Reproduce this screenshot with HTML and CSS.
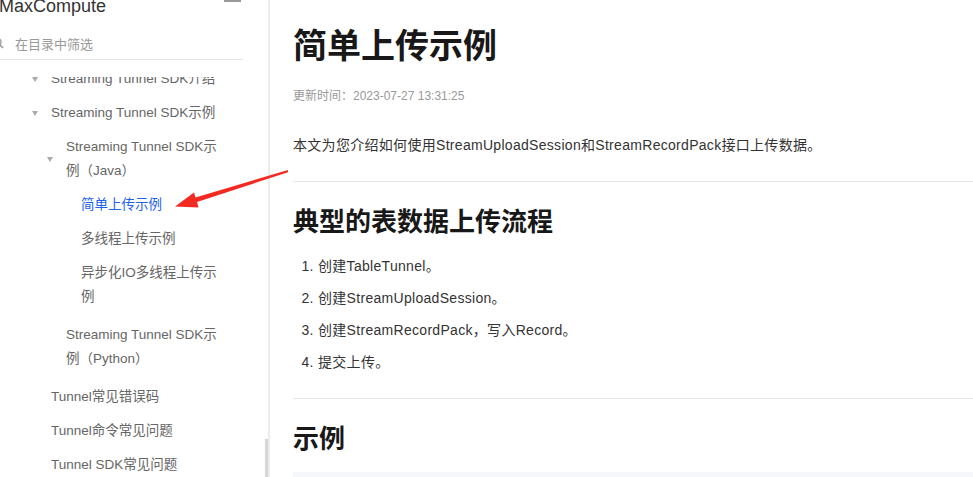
FILE: index.html
```html
<!DOCTYPE html>
<html lang="zh-CN">

<head>
  <meta charset="utf-8">
  <title>简单上传示例</title>
  <link rel="stylesheet" href="styles.css">
  <meta name="viewport" content="width=device-width, initial-scale=1.0">
</head>

<body>
  <div class="page">
    <aside class="sidebar">
      <div class="nav">
        <div class="nav-head">
          <span class="nav-title">MaxCompute</span>
          <span class="nav-fold"></span>
        </div>
        <div class="nav-search">
          <svg class="search-icon" width="12" height="12" viewBox="0 0 12 12">
            <circle cx="5" cy="5" r="4" fill="none" stroke="#999" stroke-width="1.4" />
            <line x1="8" y1="8" x2="11" y2="11" stroke="#999" stroke-width="1.6" />
          </svg>
          <span>在目录中筛选</span>
        </div>
        <div class="tree-view">
          <ul class="tree">
            <li class="item lv2"><i class="caret"></i><span>Streaming Tunnel SDK介绍</span></li>
            <li class="item lv2"><i class="caret"></i><span>Streaming Tunnel SDK示例</span></li>
            <li class="group">
              <ul>
                <li class="item lv3"><i class="caret"></i><span>Streaming Tunnel SDK示例（Java）</span></li>
                <li class="group">
                  <ul>
                    <li class="item lv4 active"><i class="caret none"></i><span>简单上传示例</span></li>
                    <li class="item lv4"><i class="caret none"></i><span>多线程上传示例</span></li>
                    <li class="item lv4"><i class="caret none"></i><span>异步化IO多线程上传示例</span></li>
                  </ul>
                </li>
                <li class="item lv3"><i class="caret none"></i><span>Streaming Tunnel SDK示例（Python）</span></li>
              </ul>
            </li>
            <li class="item lv2"><i class="caret none"></i><span>Tunnel常见错误码</span></li>
            <li class="item lv2"><i class="caret none"></i><span>Tunnel命令常见问题</span></li>
            <li class="item lv2"><i class="caret none"></i><span>Tunnel SDK常见问题</span></li>
          </ul>
        </div>
      </div>
      <div class="scroll-track">
        <div class="scroll-thumb"></div>
      </div>
    </aside>

    <main class="content">
      <h1>简单上传示例</h1>
      <p class="meta">更新时间：2023-07-27 13:31:25</p>
      <p class="intro">本文为您介绍如何使用StreamUploadSession和StreamRecordPack接口上传数据。</p>
      <hr>
      <h2>典型的表数据上传流程</h2>
      <ol class="steps">
        <li>创建TableTunnel。</li>
        <li>创建StreamUploadSession。</li>
        <li>创建StreamRecordPack，写入Record。</li>
        <li>提交上传。</li>
      </ol>
      <hr>
      <h2>示例</h2>
      <div class="code-block"></div>
    </main>
  </div>

  <svg class="arrow" width="973" height="477" viewBox="0 0 973 477">
    <polygon fill="#f22a22"
      points="288,170 288,172.2 197,202 198.5,207.5 175,206.5 194,192.5 195.5,197.5" />
  </svg>
</body>

</html>
```

FILE: styles.css
```css
* {
  margin: 0;
  padding: 0;
  box-sizing: border-box;
}

body {
  font-family: "Liberation Sans", "Noto Sans CJK SC", sans-serif;
  color: #333;
  background: #fff;
  height: 100vh;
  overflow: hidden;
  position: relative;
}

.page {
  display: flex;
  height: 100vh;
}

/* sidebar */

.sidebar {
  width: 270px;
  flex-shrink: 0;
  display: flex;
  border-right: 2px solid #ececec;
  overflow: hidden;
}

.nav {
  flex: 1;
  min-width: 0;
  margin-left: -20px;
  padding-left: 12px;
  display: flex;
  flex-direction: column;
}

.nav-head {
  display: flex;
  margin-top: -6px;
  height: 24px;
}

.nav-title {
  padding-left: 7px;
  font-size: 18px;
  line-height: 24px;
  color: #333;
}

.nav-fold {
  margin-left: auto;
  margin-right: 24px;
  margin-top: 5px;
  width: 17px;
  height: 3px;
  background: #999;
}

.nav-search {
  display: flex;
  align-items: center;
  gap: 11px;
  margin-top: 9px;
  margin-right: 22px;
  height: 33px;
  border-bottom: 1px solid #e5e5e5;
  font-size: 13px;
  color: #999;
}

.tree-view {
  flex: 1;
  margin-top: 17px;
  overflow: hidden;
}

.tree {
  list-style: none;
  margin-top: -15px;
  margin-right: 40px;
}

.tree ul {
  list-style: none;
}

.group {
  padding-bottom: 4px;
}

.item {
  display: flex;
  align-items: center;
  padding: 5px 0;
  font-size: 13.5px;
  line-height: 24px;
  color: #666;
}

.lv2 {
  padding-left: 40px;
}

.lv3 {
  padding-left: 55px;
}

.lv4 {
  padding-left: 70px;
}

.item.active {
  color: #1d62e8;
}

.caret {
  flex-shrink: 0;
  width: 19px;
  height: 4px;
  position: relative;
}

.caret::before {
  content: "";
  position: absolute;
  left: 0;
  top: 0;
  border-left: 3.5px solid transparent;
  border-right: 3.5px solid transparent;
  border-top: 5px solid #aaa;
}

.caret.none::before {
  display: none;
}

.scroll-track {
  width: 3px;
  display: flex;
  flex-direction: column;
  justify-content: flex-end;
}

.scroll-thumb {
  height: 38px;
  background: #d6d6d6;
}

/* content */

.content {
  flex: 1;
  min-width: 0;
  padding: 22px 0 0 23px;
}

.content h1 {
  font-size: 34px;
  line-height: 48px;
  font-weight: 700;
  color: #181818;
}

.meta {
  margin-top: 17px;
  font-size: 12px;
  line-height: 18px;
  color: #999;
}

.intro {
  margin-top: 29px;
  font-size: 14px;
  line-height: 22px;
  letter-spacing: 0.3px;
}

.content hr {
  border: none;
  border-top: 1px solid #e8e8e8;
}

.intro + hr {
  margin-top: 25px;
}

.content h2 {
  margin-top: 22px;
  font-size: 26px;
  line-height: 36px;
  font-weight: 700;
  color: #181818;
}

.steps {
  margin-top: 15px;
  padding-left: 25px;
  font-size: 14px;
  line-height: 22px;
  letter-spacing: 0.3px;
}

.steps li + li {
  margin-top: 10px;
}

.steps + hr {
  margin-top: 25px;
}

.code-block {
  margin-top: 15px;
  height: 40px;
  background: #f5f7fa;
}

.arrow {
  position: absolute;
  left: 0;
  top: 0;
  pointer-events: none;
}
```
